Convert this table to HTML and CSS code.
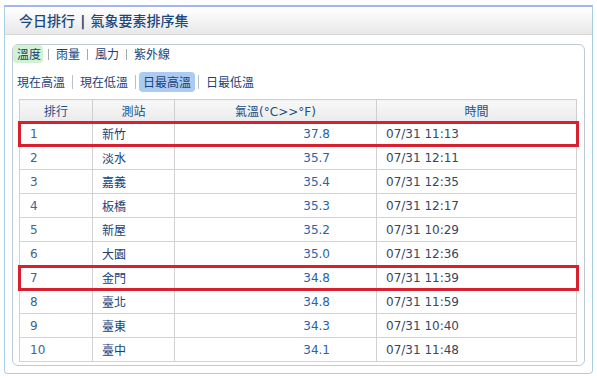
FILE: index.html
```html
<!DOCTYPE html>
<html lang="zh-Hant">
<head>
<meta charset="utf-8">
<title>今日排行</title>
<link rel="stylesheet" href="styles.css">
</head>
<body>
<div class="panel">
  <div class="panel-head">今日排行 <b class="bar">|</b> 氣象要素排序集</div>
  <div class="panel-body">
    <div class="inner">
      <div class="tabs tabs-main">
        <span class="tab tab-on-green">溫度</span><span class="sep"></span><span class="tab">雨量</span><span class="sep"></span><span class="tab">風力</span><span class="sep"></span><span class="tab">紫外線</span>
      </div>
      <div class="tabs tabs-sub">
        <span class="tab">現在高溫</span><span class="sep"></span><span class="tab">現在低溫</span><span class="sep"></span><span class="tab tab-on-blue">日最高溫</span><span class="sep"></span><span class="tab">日最低溫</span>
      </div>
      <div class="table-wrap">
        <table class="rank">
          <colgroup>
            <col class="c-rank"><col class="c-stn"><col class="c-temp"><col class="c-time">
          </colgroup>
          <thead>
            <tr><th>排行</th><th>測站</th><th>氣溫(°C&gt;&gt;°F)</th><th>時間</th></tr>
          </thead>
          <tbody>
            <tr><td class="rk">1</td><td class="stn">新竹</td><td class="tmp">37.8</td><td class="tm">07/31 11:13</td></tr>
            <tr><td class="rk">2</td><td class="stn">淡水</td><td class="tmp">35.7</td><td class="tm">07/31 12:11</td></tr>
            <tr><td class="rk">3</td><td class="stn">嘉義</td><td class="tmp">35.4</td><td class="tm">07/31 12:35</td></tr>
            <tr><td class="rk">4</td><td class="stn">板橋</td><td class="tmp">35.3</td><td class="tm">07/31 12:17</td></tr>
            <tr><td class="rk">5</td><td class="stn">新屋</td><td class="tmp">35.2</td><td class="tm">07/31 10:29</td></tr>
            <tr><td class="rk">6</td><td class="stn">大園</td><td class="tmp">35.0</td><td class="tm">07/31 12:36</td></tr>
            <tr><td class="rk">7</td><td class="stn">金門</td><td class="tmp">34.8</td><td class="tm">07/31 11:39</td></tr>
            <tr><td class="rk">8</td><td class="stn">臺北</td><td class="tmp">34.8</td><td class="tm">07/31 11:59</td></tr>
            <tr><td class="rk">9</td><td class="stn">臺東</td><td class="tmp">34.3</td><td class="tm">07/31 10:40</td></tr>
            <tr><td class="rk">10</td><td class="stn">臺中</td><td class="tmp">34.1</td><td class="tm">07/31 11:48</td></tr>
          </tbody>
        </table>
        <div class="mark mark-1"></div>
        <div class="mark mark-7"></div>
      </div>
    </div>
  </div>
</div>
</body>
</html>
```

FILE: styles.css
```css
html, body {
  margin: 0;
  padding: 0;
  background: #ffffff;
}

body {
  font-family: "DejaVu Sans", "Noto Sans CJK TC", sans-serif;
  font-size: 12px;
  color: #1c3f78;
}

.panel {
  margin: 5px 4px 0;
  border: 1px solid #a9cfe6;
  border-top: 2px solid #a3b6f0;
  border-radius: 0 0 4px 4px;
  background: #fff;
}

.panel-head {
  height: 27px;
  line-height: 27px;
  padding-left: 14px;
  background: linear-gradient(#ffffff, #e8e8e8);
  border-bottom: 1px solid #d6d6d6;
  font-family: "Noto Sans CJK TC", sans-serif;
  font-size: 14px;
  font-weight: 500;
  color: #1a4880;
}

.bar {
  font-family: "DejaVu Sans", sans-serif;
  font-weight: bold;
  margin: 0 2px;
}

.panel-body {
  padding: 9px 7px 7px;
}

.inner {
  border: 1px solid #bccbd6;
  border-radius: 6px;
  padding: 0 7px 3px 0;
}

.tabs {
  display: flex;
  align-items: center;
  font-family: "Noto Sans CJK TC", sans-serif;
  font-size: 12px;
  color: #1c3f78;
}

.tabs-main {
  height: 18px;
}

.tabs-sub {
  height: 20px;
  margin-top: 9px;
}

.tab {
  padding: 0 4px;
  line-height: 18px;
  border-radius: 4px;
}

.tabs-sub .tab {
  line-height: 20px;
}

.tab-on-green {
  background: #d2f2d2;
  padding-right: 2px;
  margin-right: 2px;
}

.tab-on-blue {
  background: #aacbf2;
}

.sep {
  display: inline-block;
  width: 1px;
  height: 11px;
  margin: 0 3px;
  background: #a8a8a8;
}

.tabs-sub .sep {
  height: 14px;
  background: #b8c0cc;
}

.table-wrap {
  position: relative;
  margin: 7px 0 0 6px;
}

.rank {
  width: 558px;
  border-collapse: collapse;
  table-layout: fixed;
  border: 1px solid #c4c4c4;
}

.c-rank { width: 73px; }
.c-stn { width: 82px; }
.c-temp { width: 202px; }

.rank th {
  height: 21px;
  padding: 0;
  font-weight: normal;
  text-align: center;
  color: #1d4f86;
  background: linear-gradient(#f8f8f8, #ebebeb);
  border: 1px solid #cfcfcf;
}

.rank td {
  height: 23px;
  padding: 0;
  border: 1px solid #d2d2d2;
}

.rk {
  padding-left: 10px !important;
  color: #40638f;
}

.stn {
  padding-left: 9px !important;
  color: #1a3f7a;
}

.tmp {
  text-align: right;
  padding-right: 46px !important;
  color: #2863a2;
}

.tm {
  padding-left: 9px !important;
  color: #36475e;
}

.mark {
  position: absolute;
  left: -1px;
  width: 561px;
  height: 26px;
  border: 3px solid #d9202e;
  box-sizing: border-box;
}

.mark-1 { top: 22px; }
.mark-7 { top: 166px; }
```
